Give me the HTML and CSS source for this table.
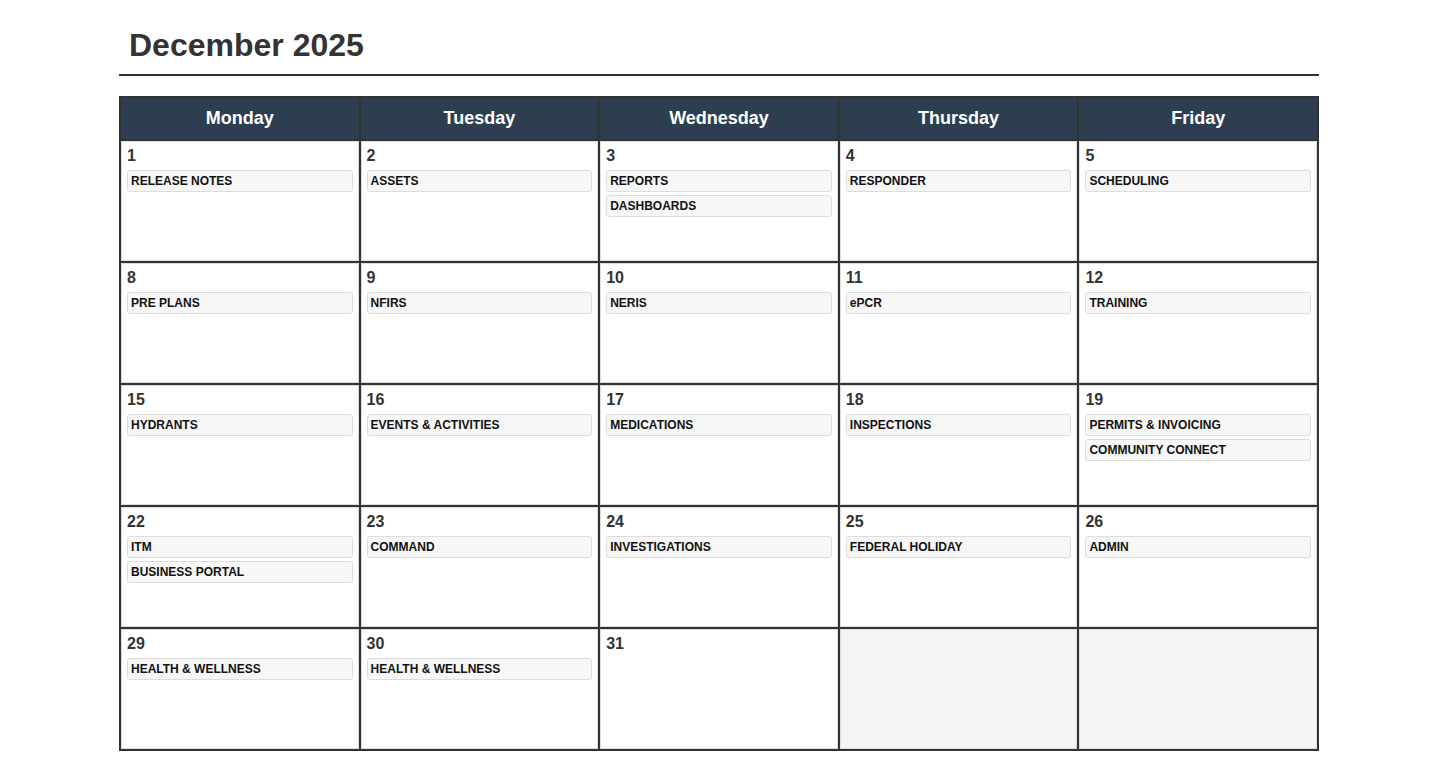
FILE: index.html
```html
<!DOCTYPE html>
<html lang="en">
<head>
<meta charset="utf-8">
<title>December 2025</title>
<link rel="stylesheet" href="styles.css">
</head>
<body>
<div class="page">
  <h1 class="title">December 2025</h1>
  <div class="calendar">
    <div class="head">Monday</div>
    <div class="head">Tuesday</div>
    <div class="head">Wednesday</div>
    <div class="head">Thursday</div>
    <div class="head">Friday</div>

    <div class="cell"><div class="num">1</div><div class="ev">RELEASE NOTES</div></div>
    <div class="cell"><div class="num">2</div><div class="ev">ASSETS</div></div>
    <div class="cell"><div class="num">3</div><div class="ev">REPORTS</div><div class="ev">DASHBOARDS</div></div>
    <div class="cell"><div class="num">4</div><div class="ev">RESPONDER</div></div>
    <div class="cell"><div class="num">5</div><div class="ev">SCHEDULING</div></div>

    <div class="cell"><div class="num">8</div><div class="ev">PRE PLANS</div></div>
    <div class="cell"><div class="num">9</div><div class="ev">NFIRS</div></div>
    <div class="cell"><div class="num">10</div><div class="ev">NERIS</div></div>
    <div class="cell"><div class="num">11</div><div class="ev">ePCR</div></div>
    <div class="cell"><div class="num">12</div><div class="ev">TRAINING</div></div>

    <div class="cell"><div class="num">15</div><div class="ev">HYDRANTS</div></div>
    <div class="cell"><div class="num">16</div><div class="ev">EVENTS &amp; ACTIVITIES</div></div>
    <div class="cell"><div class="num">17</div><div class="ev">MEDICATIONS</div></div>
    <div class="cell"><div class="num">18</div><div class="ev">INSPECTIONS</div></div>
    <div class="cell"><div class="num">19</div><div class="ev">PERMITS &amp; INVOICING</div><div class="ev">COMMUNITY CONNECT</div></div>

    <div class="cell"><div class="num">22</div><div class="ev">ITM</div><div class="ev">BUSINESS PORTAL</div></div>
    <div class="cell"><div class="num">23</div><div class="ev">COMMAND</div></div>
    <div class="cell"><div class="num">24</div><div class="ev">INVESTIGATIONS</div></div>
    <div class="cell"><div class="num">25</div><div class="ev">FEDERAL HOLIDAY</div></div>
    <div class="cell"><div class="num">26</div><div class="ev">ADMIN</div></div>

    <div class="cell"><div class="num">29</div><div class="ev">HEALTH &amp; WELLNESS</div></div>
    <div class="cell"><div class="num">30</div><div class="ev">HEALTH &amp; WELLNESS</div></div>
    <div class="cell"><div class="num">31</div></div>
    <div class="cell empty"></div>
    <div class="cell empty"></div>
  </div>
</div>
</body>
</html>
```

FILE: styles.css
```css
* { box-sizing: border-box; }

html, body {
  margin: 0;
  background: #ffffff;
  font-family: "Liberation Sans", Arial, sans-serif;
  color: #333333;
}

body {
  padding: 0 1px 0 0;
}

.page {
  width: 1200px;
  margin: 0 auto;
  padding-top: 27px;
}

.title {
  margin: 0 0 20px;
  padding: 0 10px 10px;
  font-size: 32px;
  line-height: 37px;
  font-weight: 700;
  color: #333333;
  border-bottom: 2px solid #333333;
}

.calendar {
  display: grid;
  grid-template-columns: repeat(5, 1fr);
  border-top: 2px solid #333333;
  border-left: 2px solid #333333;
}

.head {
  background: #2c3e50;
  color: #ffffff;
  font-size: 18px;
  line-height: 20px;
  font-weight: 700;
  text-align: center;
  padding: 10px 0 11px;
  border-right: 2px solid #333333;
  border-bottom: 2px solid #333333;
}

.cell {
  height: 122px;
  padding: 6px 6px;
  border-right: 2px solid #333333;
  border-bottom: 2px solid #333333;
  box-shadow: inset 0 0 0 1px #dedede;
  background: #ffffff;
  display: flex;
  flex-direction: column;
  gap: 3px;
}

.cell.empty {
  background: #f4f4f4;
}

.num {
  font-size: 16px;
  line-height: 18px;
  font-weight: 700;
  color: #333333;
  margin-bottom: 2px;
}

.ev {
  background: #f7f7f7;
  border: 1px solid #dddddd;
  border-radius: 3px;
  padding: 3px 3px;
  font-size: 12px;
  line-height: 14px;
  font-weight: 700;
  color: #111111;
  white-space: nowrap;
}
```
